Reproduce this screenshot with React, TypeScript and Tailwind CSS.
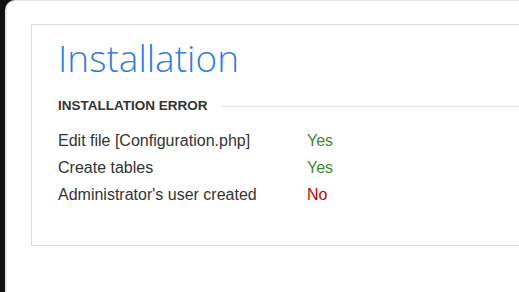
export default function App() {
  const rows = [
    { label: 'Edit file [Configuration.php]', ok: true },
    { label: 'Create tables', ok: true },
    { label: "Administrator's user created", ok: false },
  ];

  return (
    <div className="flex h-[292px] w-[519px] overflow-hidden bg-[#111]">
      <div className="w-[5px] shrink-0" />
      <div className="flex-1 min-w-0 bg-white rounded-tl-[10px] border-l-2 border-t border-[#e6e6e6] pt-[23px] pl-[24px]">
        {/* Main box */}
        <div className="h-[222px] w-[600px] border border-[#dcdcdc] pl-[26px]">
          <h1 className="mt-[9px] text-[37px] leading-[48px] font-light text-[#2f7de1] font-['Open_Sans',sans-serif]">
            Installation
          </h1>
          <div className="mt-[16px] flex items-center font-['Liberation_Sans',Arial,sans-serif]">
            <span className="text-[13.5px] font-bold text-[#333] leading-[16px]">INSTALLATION ERROR</span>
            <div className="ml-[13px] h-px flex-1 bg-[#e5e5e5]" />
          </div>
          <div className="mt-[13px] font-['Liberation_Sans',Arial,sans-serif] text-[16px] leading-[27px] text-[#333]">
            {rows.map((r) => (
              <div key={r.label} className="flex">
                <span className="w-[249px]">{r.label}</span>
                <span className={r.ok ? 'text-[#3c8a2e]' : 'text-[#cc0000]'}>{r.ok ? 'Yes' : 'No'}</span>
              </div>
            ))}
          </div>
        </div>
      </div>
    </div>
  );
}
